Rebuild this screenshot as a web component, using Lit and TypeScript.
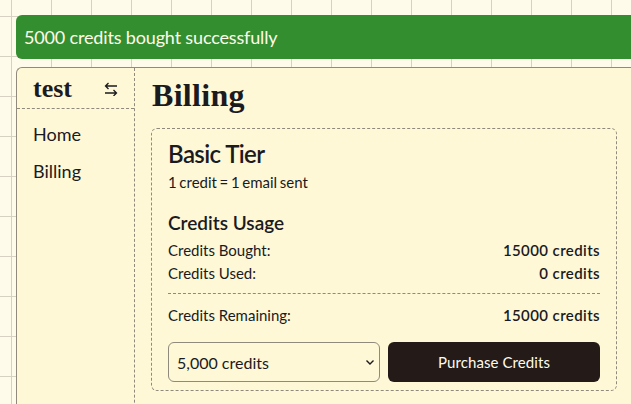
import { LitElement, html, css } from 'lit';
import { customElement } from 'lit/decorators.js';

@customElement('app-root')
export class AppRoot extends LitElement {
  static styles = css`
    :host {
      display: block;
      box-sizing: border-box;
      height: 404px;
      overflow: hidden;
      padding: 15px 0 0 16px;
      font-family: 'Lato', sans-serif;
      color: #1a1a1f;
      background-color: #fffbeb;
      background-image:
        linear-gradient(#d6d1c2 1px, transparent 1px),
        linear-gradient(90deg, #d6d1c2 1px, transparent 1px);
      background-size: 40px 40px;
      background-position: 11px 16px;
    }

    .toast {
      height: 44px;
      box-sizing: border-box;
      padding-left: 8px;
      display: flex;
      align-items: center;
      margin-bottom: 8px;
      background: #338e2f;
      color: #fffbeb;
      font-size: 18px;
      letter-spacing: -0.16px;
      border-radius: 6px 0 0 6px;
    }

    .shell {
      display: flex;
      height: 400px;
      background: #fef8d6;
      border: 1px solid #8f8a7c;
      border-right: none;
      border-radius: 6px 0 0 0;
    }

    .side {
      width: 117px;
      flex: none;
      border-right: 1px dashed #8f8a7c;
    }

    .side-head {
      height: 41px;
      box-sizing: border-box;
      padding: 0 16px;
      display: flex;
      align-items: center;
      justify-content: space-between;
      border-bottom: 1px dashed #8f8a7c;
    }

    .brand {
      font-family: 'Liberation Serif', serif;
      font-weight: 700;
      font-size: 26px;
      margin-top: 2px;
    }

    .toggle {
      width: 14px;
      height: 14px;
      display: block;
      margin-top: 2px;
    }

    .nav {
      display: flex;
      flex-direction: column;
      gap: 15px;
      padding: 14px 16px;
      font-size: 18px;
      line-height: 22px;
    }

    .main {
      flex: 1;
      padding: 7px 14px 0 16px;
    }

    h1 {
      margin: 0 0 13px 1px;
      font-family: 'Liberation Serif', serif;
      font-size: 32px;
      line-height: 40px;
      font-weight: 700;
      letter-spacing: 0.3px;
    }

    .card {
      box-sizing: border-box;
      height: 263px;
      padding: 11px 16px 8px;
      border: 1px dashed #8f8a7c;
      border-radius: 6px;
    }

    h2 {
      margin: 0;
      font-size: 24px;
      line-height: 28px;
      font-weight: 600;
      letter-spacing: -0.6px;
    }

    .note {
      margin: 3px 0 0;
      font-size: 15px;
      line-height: 22px;
      word-spacing: -1.2px;
    }

    h3 {
      margin: 19px 0 5px;
      font-size: 19px;
      line-height: 22px;
      font-weight: 600;
    }

    .row {
      display: flex;
      justify-content: space-between;
      font-size: 15px;
      line-height: 23px;
    }

    .row b {
      font-weight: 600;
      letter-spacing: 0.4px;
    }

    hr {
      margin: 8px 0 10px;
      border: none;
      border-top: 1px dashed #8f8a7c;
    }

    .buy {
      display: grid;
      grid-template-columns: 1fr 1fr;
      gap: 8px;
      margin-top: 15px;
    }

    .picker {
      position: relative;
      display: flex;
    }

    select {
      flex: 1;
      height: 40px;
      padding: 0 8px;
      appearance: none;
      font: 16px 'Lato', sans-serif;
      color: inherit;
      background: transparent;
      border: 1px solid #8f8a7c;
      border-radius: 6px;
    }

    .chevron {
      position: absolute;
      right: 5px;
      top: 17px;
      width: 10px;
      height: 7px;
      pointer-events: none;
    }

    button {
      height: 40px;
      font: 15px 'Lato', sans-serif;
      letter-spacing: 0.1px;
      color: #fffbeb;
      background: #241a17;
      border: none;
      border-radius: 6px;
    }
  `;

  render() {
    return html`
      <div class="toast">5000 credits bought successfully</div>
      <div class="shell">
        <aside class="side">
          <div class="side-head">
            <span class="brand">test</span>
            <svg class="toggle" viewBox="0 0 14 14" fill="none" stroke="currentColor" stroke-width="1.3">
              <path d="M13 4H1.5M4.5 1l-3 3 3 3" />
              <path d="M1 11h11.5M9.5 8l3 3-3 3" />
            </svg>
          </div>
          <nav class="nav">
            <span>Home</span>
            <span>Billing</span>
          </nav>
        </aside>
        <main class="main">
          <h1>Billing</h1>
          <section class="card">
            <h2>Basic Tier</h2>
            <p class="note">1 credit = 1 email sent</p>
            <h3>Credits Usage</h3>
            <div class="row"><span>Credits Bought:</span><b>15000 credits</b></div>
            <div class="row"><span>Credits Used:</span><b>0 credits</b></div>
            <hr />
            <div class="row"><span>Credits Remaining:</span><b>15000 credits</b></div>
            <div class="buy">
              <div class="picker">
                <select>
                  <option>5,000 credits</option>
                  <option>10,000 credits</option>
                </select>
                <svg class="chevron" viewBox="0 0 10 7" fill="none" stroke="currentColor" stroke-width="1.4">
                  <path d="M1.5 1.5L5 5l3.5-3.5" />
                </svg>
              </div>
              <button>Purchase Credits</button>
            </div>
          </section>
        </main>
      </div>
    `;
  }
}
